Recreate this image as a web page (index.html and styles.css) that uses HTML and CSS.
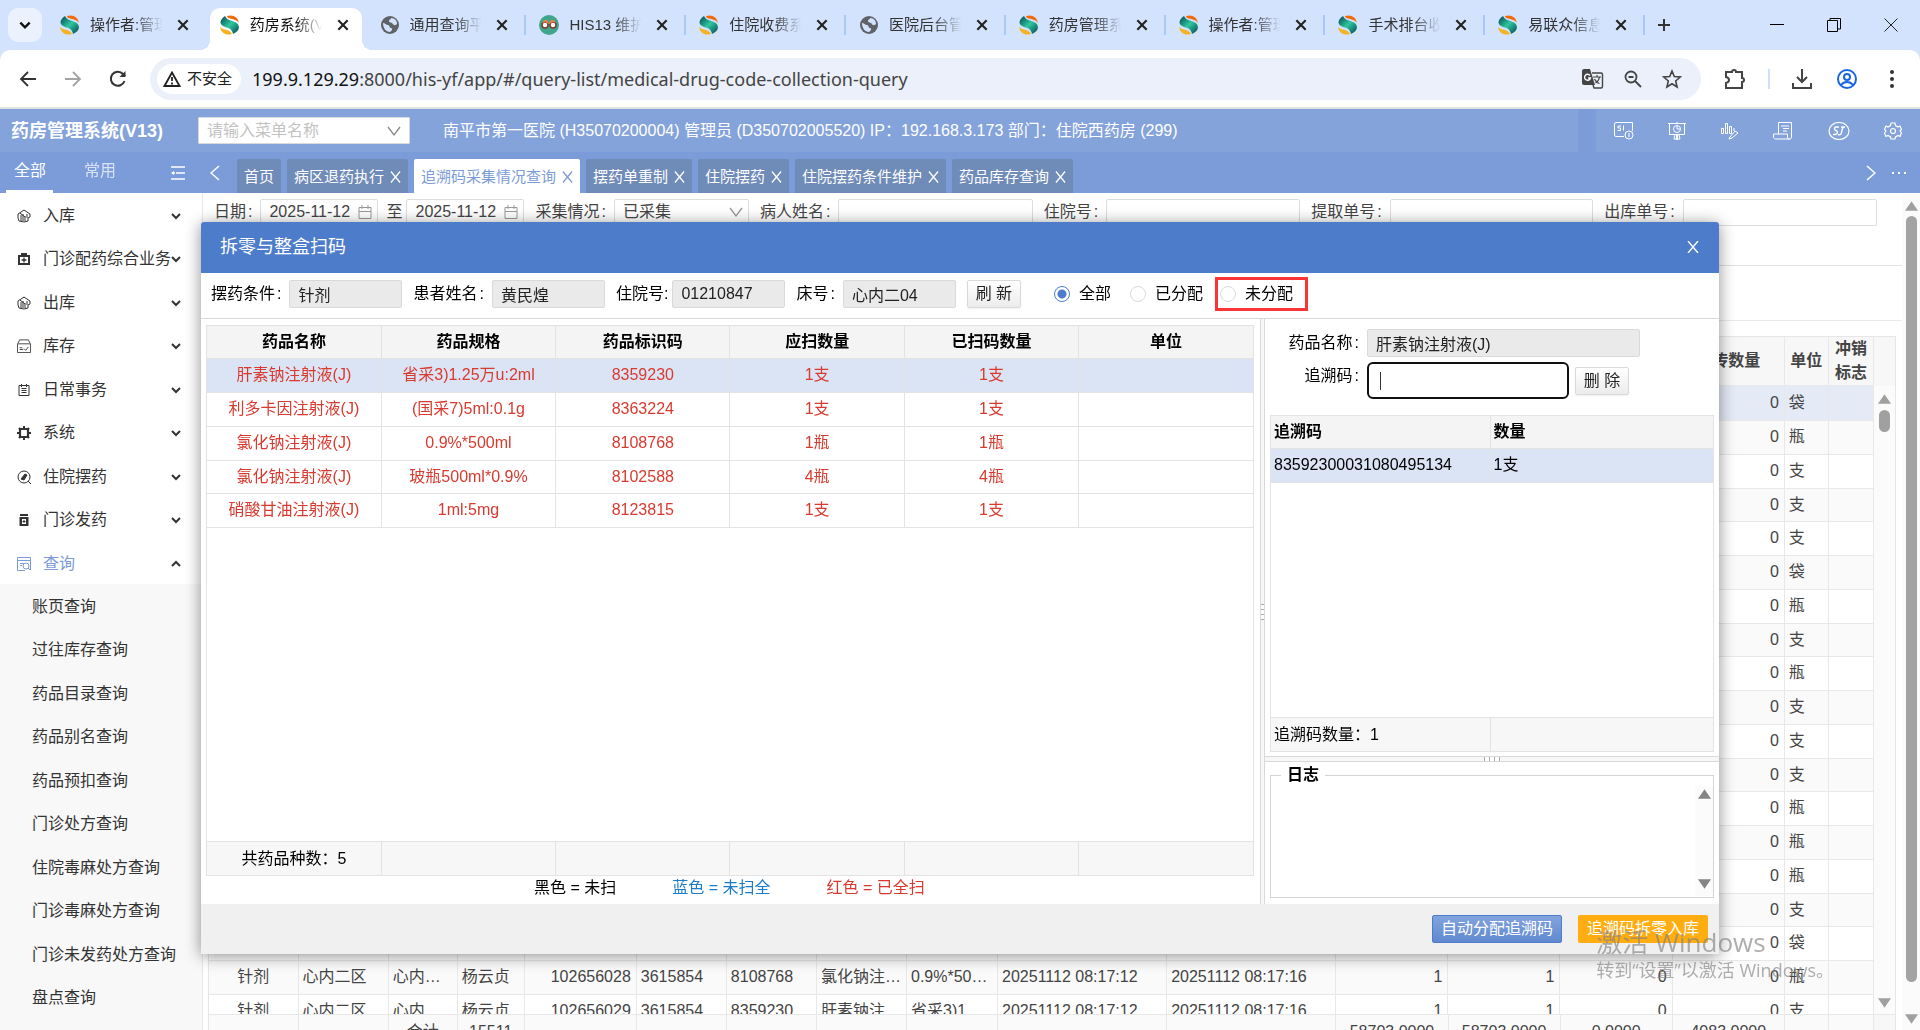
FILE: index.html
```html
<!DOCTYPE html>
<html lang="zh-CN">
<head>
<meta charset="utf-8">
<title>药房管理系统(V13)</title>
<link rel="stylesheet" href="styles.css">
</head>
<body>
<svg class="sprite" aria-hidden="true">
  <defs>
    <linearGradient id="teal" x1="0" y1="0" x2="1" y2="1"><stop offset="0" stop-color="#03444f"/><stop offset=".5" stop-color="#2fc79f"/><stop offset="1" stop-color="#03444f"/></linearGradient>
  </defs>
  <symbol id="logo" viewBox="0 0 20 20">
    <path d="M5 1C-1 5-1 10 5 12c4 1 7 2 8 7 7-3 8-9 2-12C10 5 7 5 5 1z" fill="url(#teal)"/>
    <path d="M7 1c6-2 11 1 12 7-2-3-4-3-7-4S7 3 7 1z" fill="#f26a0a"/>
    <path d="M0 12c2 2 4 2 7 3s4 2 5 4C6 21 1 18 0 12z" fill="#f5b321"/>
  </symbol>
  <symbol id="globe" viewBox="0 0 20 20">
    <circle cx="10" cy="10" r="9" fill="#5f6368"/>
    <path d="M3 8c2 0 3 2 5 2s1 3 3 3 1 3-1 4c-4 0-7-4-7-9zM11 3c0 2-2 1-2 3s3 1 4 3 3 1 4 0c0-3-2-6-6-6z" fill="#d3e3fd"/>
  </symbol>
  <symbol id="his" viewBox="0 0 20 20">
    <circle cx="10" cy="10" r="10" fill="#3fa58c"/><circle cx="6" cy="10" r="3" fill="#fff" stroke="#7a3b2a" stroke-width="1.500"/><circle cx="14" cy="10" r="3" fill="#fff" stroke="#7a3b2a" stroke-width="1.500"/><path d="M3 8l2-3h3l2 3 2-3h3l2 3-3-1-4 2-4-2z" fill="#e8804c"/>
  </symbol>
  <symbol id="x" viewBox="0 0 12 12"><path d="M2 2l8 8M10 2l-8 8" stroke="currentColor" stroke-width="1.800" fill="none"/></symbol>
  <symbol id="xthin" viewBox="0 0 12 12"><path d="M1 0l10 12M11 0L1 12" stroke="currentColor" stroke-width="1.400" fill="none"/></symbol>
  <symbol id="down" viewBox="0 0 12 12"><path d="M2 4l4 4 4-4" stroke="currentColor" stroke-width="2" fill="none"/></symbol>
  <symbol id="up" viewBox="0 0 12 12"><path d="M2 8l4-4 4 4" stroke="currentColor" stroke-width="2" fill="none"/></symbol>
  <symbol id="caret" viewBox="0 0 14 14"><path d="M1 3l6 8 6-8" stroke="currentColor" stroke-width="1.300" fill="none"/></symbol>
  <symbol id="cal" viewBox="0 0 14 14"><path d="M1 2.500h12v11H1zM1 6.500h12M4 0v4M10 0v4" stroke="currentColor" fill="none"/></symbol>
  <symbol id="stock" viewBox="0 0 14 14"><path d="M1 5l6-4 6 4v3l-2 1v3l-4 1-5-1-1-3zM4 12V6M6 12V5M8 12V7M10 9V5M3 4l5 4" stroke="currentColor" fill="none"/></symbol>
  <symbol id="box" viewBox="0 0 14 14"><path d="M2 4h10v8H2zM4 2h6" stroke="currentColor" stroke-width="2" fill="none"/><path d="M7 5.500v5M4.500 8h5" stroke="currentColor" stroke-width="1.300"/></symbol>
  <symbol id="ware" viewBox="0 0 16 16"><path d="M.5 5.500h15v10H.5zM1 5l2-4h10l2 4M3 10h3M3 12h4M8 11l2 2 3-4" stroke="currentColor" fill="none"/></symbol>
  <symbol id="list" viewBox="0 0 14 14"><path d="M2 2.500h10v10H2zM4.500 5.500h5M4.500 7.500h5M4.500 9.500h5M4.500 1v3M9.500 1v3" stroke="currentColor" fill="none"/></symbol>
  <symbol id="cog" viewBox="0 0 14 14"><path d="M3 3h8v8H3z" stroke="currentColor" stroke-width="2.200" fill="none"/><path d="M7 0v2M7 12v2M0 7h2M12 7h2M2 2l1 1M12 2l-1 1M2 12l1-1M12 12l-1-1" stroke="currentColor" stroke-width="2"/></symbol>
  <symbol id="pill" viewBox="0 0 14 14"><circle cx="7" cy="7" r="6" stroke="currentColor" fill="none"/><path d="M4 9l4-5 2 1-3 5zM11 11l3 3" stroke="currentColor" fill="currentColor"/></symbol>
  <symbol id="jar" viewBox="0 0 14 14"><path d="M3 1h8v2H3zM2.500 4h9v9h-9z" fill="currentColor"/><path d="M5 6h4v5H5z" fill="#fff"/><path d="M7 7v3M5.500 8.500h3" stroke="currentColor"/></symbol>
  <symbol id="find" viewBox="0 0 14 14"><path d="M13.500 5V.5H.5v13H8M.5 3.500h13M3 6.500h4M3 8.500h2M13.500 5v8" stroke="currentColor" fill="none"/><circle cx="9" cy="9" r="3" stroke="currentColor" fill="none"/><path d="M11 11l2 2" stroke="currentColor"/></symbol>
  <symbol id="triup" viewBox="0 0 14 10"><path d="M7 0l7 10H0z" fill="currentColor"/></symbol>
  <symbol id="tridown" viewBox="0 0 14 10"><path d="M7 10l7-10H0z" fill="currentColor"/></symbol>
</svg>

<div class="browser">
  <div class="tabstrip">
    <button class="tabsearch" aria-label="搜索标签页"><svg width="14" height="14"><use href="#down"/></svg></button>
    <div class="tabs">
      <div class="tab nosep"><svg class="fav"><use href="#logo"/></svg><span>操作者:管理员</span><button aria-label="关闭"><svg><use href="#x"/></svg></button></div>
      <div class="tab nosep active"><svg class="fav"><use href="#logo"/></svg><span>药房系统(V13)</span><button aria-label="关闭"><svg><use href="#x"/></svg></button></div>
      <div class="tab"><svg class="fav"><use href="#globe"/></svg><span>通用查询平台</span><button aria-label="关闭"><svg><use href="#x"/></svg></button></div>
      <div class="tab"><svg class="fav"><use href="#his"/></svg><span>HIS13 维护</span><button aria-label="关闭"><svg><use href="#x"/></svg></button></div>
      <div class="tab"><svg class="fav"><use href="#logo"/></svg><span>住院收费系统</span><button aria-label="关闭"><svg><use href="#x"/></svg></button></div>
      <div class="tab"><svg class="fav"><use href="#globe"/></svg><span>医院后台管理</span><button aria-label="关闭"><svg><use href="#x"/></svg></button></div>
      <div class="tab"><svg class="fav"><use href="#logo"/></svg><span>药房管理系统</span><button aria-label="关闭"><svg><use href="#x"/></svg></button></div>
      <div class="tab"><svg class="fav"><use href="#logo"/></svg><span>操作者:管理员</span><button aria-label="关闭"><svg><use href="#x"/></svg></button></div>
      <div class="tab"><svg class="fav"><use href="#logo"/></svg><span>手术排台收费</span><button aria-label="关闭"><svg><use href="#x"/></svg></button></div>
      <div class="tab"><svg class="fav"><use href="#logo"/></svg><span>易联众信息</span><button aria-label="关闭"><svg><use href="#x"/></svg></button></div>
    </div>
    <button class="newtab" aria-label="新标签页"><svg width="14" height="14" viewBox="0 0 14 14"><path d="M7 1v12M1 7h12" stroke="#333" stroke-width="2"/></svg></button>
    <div class="winbtns">
      <button aria-label="最小化"><svg width="14" height="14" viewBox="0 0 14 14"><path d="M0 6.500h14" stroke="#000"/></svg></button>
      <button aria-label="还原"><svg width="14" height="14" viewBox="0 0 14 14"><path d="M.5 2.500h10v11H.5zM3 2V.5h10.500V11H11" fill="none" stroke="#000"/></svg></button>
      <button aria-label="关闭窗口"><svg width="14" height="14" viewBox="0 0 14 14"><path d="M.5.5l13 13M13.500.5l-13 13" stroke="#222"/></svg></button>
    </div>
  </div>
  <div class="toolbar">
    <button aria-label="后退"><svg width="18" height="18" viewBox="0 0 18 18"><path d="M17 9H2M9 2L2 9l7 7" fill="none" stroke="#333" stroke-width="1.800"/></svg></button>
    <button aria-label="前进"><svg width="18" height="18" viewBox="0 0 18 18"><path d="M1 9h15M9 2l7 7-7 7" fill="none" stroke="#a3a3a3" stroke-width="1.800"/></svg></button>
    <button aria-label="刷新"><svg width="18" height="18" viewBox="0 0 18 18"><path d="M15.500 11A7 7 0 1 1 14 4l2 2" fill="none" stroke="#333" stroke-width="2"/><path d="M16.500 1v6h-6z" fill="#333"/></svg></button>
    <div class="omnibox">
      <button class="chip"><svg width="18" height="16" viewBox="0 0 18 16"><path d="M9 1.500L1.500 15h15z" fill="none" stroke="#222" stroke-width="1.800"/><path d="M9 6v4M9 11.500v2" stroke="#222" stroke-width="1.800"/></svg>不安全</button>
      <div class="url"><b>199.9.129.29</b>:8000/his-yf/app/#/query-list/medical-drug-code-collection-query</div>
      <svg width="22" height="20" viewBox="0 0 22 20"><path d="M2 0h6l5 16H2a2 2 0 0 1-2-2V2a2 2 0 0 1 2-2z" fill="#444"/><path d="M10 4h9a1.500 1.500 0 0 1 1.500 1.500v12A1.500 1.500 0 0 1 19 19h-7l-1-3" fill="none" stroke="#444" stroke-width="1.400"/><path d="M8 6.500A3 3 0 1 0 8.500 9H6" stroke="#fff" fill="none" stroke-width="1.400"/><path d="M11 8h8M15 6v2M17.500 8c-.5 3-2 5-4 6M12.500 10c1 2 3 4 5 4.500" stroke="#444" fill="none" stroke-width="1.200"/></svg>
      <svg width="18" height="18" viewBox="0 0 18 18"><circle cx="7" cy="7" r="5.500" fill="none" stroke="#444" stroke-width="1.800"/><path d="M11 11l6 6M4.500 7h5" stroke="#444" stroke-width="1.800"/></svg>
      <svg width="20" height="20" viewBox="0 0 20 20"><path d="M10 2l2.300 5.500 6 .5-4.600 4 1.400 6-5.100-3.200L4.900 18l1.400-6-4.600-4 6-.5z" fill="none" stroke="#444" stroke-width="1.600"/></svg>
    </div>
    <svg width="22" height="22" viewBox="0 0 22 22"><path d="M2 4h6a2 2 0 0 1 4 0h6v6a2 2 0 0 1 0 4v6H2v-5c4-1 4-5 0-6z" fill="none" stroke="#444" stroke-width="2"/></svg>
    <i class="bar"></i>
    <svg width="20" height="20" viewBox="0 0 20 20"><path d="M10 0v12M5 8l5 5 5-5M1 14v5h18v-5" fill="none" stroke="#444" stroke-width="2"/></svg>
    <svg width="20" height="20" viewBox="0 0 20 20"><g fill="none" stroke="#1a66e0" stroke-width="2"><circle cx="10" cy="10" r="9"/><circle cx="10" cy="8" r="3"/><path d="M4 16c3-4 9-4 12 0"/></g></svg>
    <svg width="6" height="18" viewBox="0 0 6 18"><circle cx="3" cy="2" r="2" fill="#333"/><circle cx="3" cy="9" r="2" fill="#333"/><circle cx="3" cy="16" r="2" fill="#333"/></svg>
  </div>
</div>

<header class="apphead">
  <div class="apphead-left">
    <h1>药房管理系统(V13)</h1>
    <div class="menusel"><select aria-label="菜单名称"><option>请输入菜单名称</option></select><svg width="14" height="14"><use href="#caret"/></svg></div>
    <p>南平市第一医院 (H35070200004) 管理员 (D350702005520) IP：192.168.3.173 部门：住院西药房 (299)</p>
  </div>
  <div class="apphead-icons">
    <svg width="20" height="18" viewBox="0 0 20 18"><path d="M10 14.500H2a1.500 1.500 0 0 1-1.500-1.500V2A1.500 1.500 0 0 1 2 .5h16.500V9M7 4H4v2h2.500v2.500H3.500M9.500 3.500v5" fill="none" stroke="#fff"/><circle cx="15" cy="13" r="4" fill="none" stroke="#fff"/><path d="M15 11v4" stroke="#fff"/></svg>
    <svg width="18" height="18" viewBox="0 0 18 18"><path d="M0 1.500h18M1.500 2v10.500h15V2M9 0v2M7 13l-1 4h6l-1-4" fill="none" stroke="#fff"/><path d="M8 13h2v5H8z" fill="#fff"/><circle cx="9" cy="7" r="3.500" fill="none" stroke="#fff"/><path d="M9 4v3h3" fill="none" stroke="#fff"/></svg>
    <svg width="18" height="18" viewBox="0 0 18 18"><path d="M.5 6.500h2v5h-2zM4.500 1.500h2v10h-2zM8.500 4.500h2v7h-2zM9 15l5-6 3 2-6 5-3 1zM13 6v3" fill="none" stroke="#fff"/></svg>
    <svg width="20" height="18" viewBox="0 0 20 18"><path d="M5.500 12V.5h13V15c0 3-4 3-4 0v-3H.5v3c0 1 1 2 2 2h14M8 4h8M10 6.500h6M10 9h4" fill="none" stroke="#fff"/></svg>
    <svg width="22" height="18" viewBox="0 0 22 18"><ellipse cx="11" cy="9" rx="10" ry="8.500" fill="none" stroke="#fff" stroke-width="1.200"/><path d="M11 5H8c-2 0-2 3 0 3.500s2 4-1 4H5M15 5l-2 7c-.5 1-2 1-3 .5M13 5h4" fill="none" stroke="#fff" stroke-width="1.400"/></svg>
    <svg width="18" height="18" viewBox="0 0 18 18"><path d="M7 1h4l.5 2.500L14 5l2-1 1.500 3.500L16 9l1.500 2L16 14.500l-2-1-2.500 1.500L11 17H7l-.5-2L4 13.500l-2 1L.5 11 2 9 .5 7.500 2 4l2 1 2.500-1.500z" fill="none" stroke="#fff" stroke-width="1.200"/><circle cx="9" cy="9" r="2.500" fill="none" stroke="#fff" stroke-width="1.200"/></svg>
  </div>
</header>

<nav class="navrow">
  <div class="navleft">
    <button class="on">全部</button><button>常用</button>
    <svg width="14" height="14" viewBox="0 0 14 14"><path d="M0 1h14M5 7h9M0 13h14M1 7h3" stroke="#fff" stroke-width="1.500"/><path d="M0 7l3-2v4z" fill="#fff"/></svg>
  </div>
  <svg class="arrow" width="10" height="16" viewBox="0 0 10 16"><path d="M9 1L1 8l8 7" fill="none" stroke="#fff" stroke-width="1.500"/></svg>
  <div class="pages">
    <a href="#">首页</a>
    <a href="#">病区退药执行<svg><use href="#xthin"/></svg></a>
    <a href="#" class="cur">追溯码采集情况查询<svg><use href="#xthin"/></svg></a>
    <a href="#">摆药单重制<svg><use href="#xthin"/></svg></a>
    <a href="#">住院摆药<svg><use href="#xthin"/></svg></a>
    <a href="#">住院摆药条件维护<svg><use href="#xthin"/></svg></a>
    <a href="#">药品库存查询<svg><use href="#xthin"/></svg></a>
  </div>
  <svg class="arrow" width="10" height="16" viewBox="0 0 10 16"><path d="M1 1l8 7-8 7" fill="none" stroke="#fff" stroke-width="1.500"/></svg>
  <svg class="dots" width="14" height="4" viewBox="0 0 14 4"><path d="M0 2h2M6 2h2M12 2h2" stroke="#fff" stroke-width="2"/></svg>
</nav>

<div class="work">
  <aside>
    <ul class="menu">
      <li><svg class="ico"><use href="#stock"/></svg><span>入库</span><svg class="chev"><use href="#down"/></svg></li>
      <li><svg class="ico"><use href="#box"/></svg><span>门诊配药综合业务</span><svg class="chev"><use href="#down"/></svg></li>
      <li><svg class="ico"><use href="#stock"/></svg><span>出库</span><svg class="chev"><use href="#down"/></svg></li>
      <li><svg class="ico"><use href="#ware"/></svg><span>库存</span><svg class="chev"><use href="#down"/></svg></li>
      <li><svg class="ico"><use href="#list"/></svg><span>日常事务</span><svg class="chev"><use href="#down"/></svg></li>
      <li><svg class="ico"><use href="#cog"/></svg><span>系统</span><svg class="chev"><use href="#down"/></svg></li>
      <li><svg class="ico"><use href="#pill"/></svg><span>住院摆药</span><svg class="chev"><use href="#down"/></svg></li>
      <li><svg class="ico"><use href="#jar"/></svg><span>门诊发药</span><svg class="chev"><use href="#down"/></svg></li>
      <li class="open"><svg class="ico"><use href="#find"/></svg><span>查询</span><svg class="chev"><use href="#up"/></svg></li>
    </ul>
    <ul class="submenu">
      <li><a href="#">账页查询</a></li>
      <li><a href="#">过往库存查询</a></li>
      <li><a href="#">药品目录查询</a></li>
      <li><a href="#">药品别名查询</a></li>
      <li><a href="#">药品预扣查询</a></li>
      <li><a href="#">门诊处方查询</a></li>
      <li><a href="#">住院毒麻处方查询</a></li>
      <li><a href="#">门诊毒麻处方查询</a></li>
      <li><a href="#">门诊未发药处方查询</a></li>
      <li><a href="#">盘点查询</a></li>
    </ul>
  </aside>

  <main>
    <form class="search">
      <label for="d1">日期<i>:</i></label>
      <span class="date"><input id="d1" value="2025-11-12"><svg><use href="#cal"/></svg></span>
      <label for="d2" class="to">至</label>
      <span class="date"><input id="d2" value="2025-11-12"><svg><use href="#cal"/></svg></span>
      <label for="st">采集情况<i>:</i></label>
      <span class="state"><select id="st"><option>已采集</option></select><svg><use href="#caret"/></svg></span>
      <label for="nm">病人姓名<i>:</i></label><input id="nm" class="grow">
      <label for="zy">住院号<i>:</i></label><input id="zy" class="grow">
      <label for="tq">提取单号<i>:</i></label><input id="tq" class="grow more">
      <label for="ck">出库单号<i>:</i></label><input id="ck" class="grow">
    </form>
    <div class="band"></div>
    <div class="grid">
      <div class="grid-head">
        <table>
          <colgroup><col class="c89"><col class="c90"><col class="c69"><col class="c67"><col class="c112"><col class="c90"><col class="c90"><col class="c90"><col class="c91"><col class="c169"><col class="c169"><col class="c112"><col class="c112"><col class="c112"><col class="c112"><col class="c44"><col class="c45"></colgroup>
          <tr><th colspan="14"></th><th>上传数量</th><th>单位</th><th>冲销标志</th></tr>
        </table>
        <div class="gutter"></div>
      </div>
      <div class="grid-body">
        <table>
          <colgroup><col class="c89"><col class="c90"><col class="c69"><col class="c67"><col class="c112"><col class="c90"><col class="c90"><col class="c90"><col class="c91"><col class="c169"><col class="c169"><col class="c112"><col class="c112"><col class="c112"><col class="c112"><col class="c44"><col class="c45"></colgroup>
          <tr class="sel"><td colspan="14"></td><td class="n">0</td><td>袋</td><td></td></tr>
          <tr><td colspan="14"></td><td class="n">0</td><td>瓶</td><td></td></tr>
          <tr><td colspan="14"></td><td class="n">0</td><td>支</td><td></td></tr>
          <tr><td colspan="14"></td><td class="n">0</td><td>支</td><td></td></tr>
          <tr><td colspan="14"></td><td class="n">0</td><td>支</td><td></td></tr>
          <tr><td colspan="14"></td><td class="n">0</td><td>袋</td><td></td></tr>
          <tr><td colspan="14"></td><td class="n">0</td><td>瓶</td><td></td></tr>
          <tr><td colspan="14"></td><td class="n">0</td><td>支</td><td></td></tr>
          <tr><td colspan="14"></td><td class="n">0</td><td>瓶</td><td></td></tr>
          <tr><td colspan="14"></td><td class="n">0</td><td>支</td><td></td></tr>
          <tr><td colspan="14"></td><td class="n">0</td><td>支</td><td></td></tr>
          <tr><td colspan="14"></td><td class="n">0</td><td>支</td><td></td></tr>
          <tr><td colspan="14"></td><td class="n">0</td><td>瓶</td><td></td></tr>
          <tr><td colspan="14"></td><td class="n">0</td><td>瓶</td><td></td></tr>
          <tr><td colspan="14"></td><td class="n">0</td><td>瓶</td><td></td></tr>
          <tr><td colspan="14"></td><td class="n">0</td><td>支</td><td></td></tr>
          <tr><td></td><td></td><td></td><td></td><td></td><td></td><td></td><td></td><td></td><td></td><td></td><td></td><td></td><td></td><td class="n">0</td><td>袋</td><td></td></tr>
          <tr><td class="m">针剂</td><td>心内二区</td><td>心内…</td><td>杨云贞</td><td class="n">102656028</td><td>3615854</td><td>8108768</td><td>氯化钠注…</td><td>0.9%*50…</td><td>20251112 08:17:12</td><td>20251112 08:17:16</td><td class="n">1</td><td class="n">1</td><td class="n">0</td><td class="n">0</td><td>瓶</td><td></td></tr>
          <tr><td class="m">针剂</td><td>心内二区</td><td>心内…</td><td>杨云贞</td><td class="n">102656029</td><td>3615854</td><td>8359230</td><td>肝素钠注…</td><td>省采3)1…</td><td>20251112 08:17:12</td><td>20251112 08:17:16</td><td class="n">1</td><td class="n">1</td><td class="n">0</td><td class="n">0</td><td>支</td><td></td></tr>
        </table>
        <div class="gutter scroll"><svg class="tri"><use href="#triup"/></svg><i></i><svg class="tri last"><use href="#tridown"/></svg></div>
      </div>
      <div class="grid-foot">
        <table>
          <colgroup><col class="c89"><col class="c90"><col class="c69"><col class="c67"><col class="c112"><col class="c90"><col class="c90"><col class="c90"><col class="c91"><col class="c169"><col class="c169"><col class="c112"><col class="c112"><col class="c112"><col class="c112"><col class="c44"><col class="c45"></colgroup>
          <tr><td></td><td></td><td>合计</td><td>15511</td><td></td><td></td><td></td><td></td><td></td><td></td><td></td><td>58703.0000</td><td>58703.0000</td><td>0.0000</td><td>4083.0000</td><td></td><td></td></tr>
        </table>
        <div class="gutter"></div>
      </div>
    </div>
  </main>
  <div class="pagescroll"><svg class="tri"><use href="#triup"/></svg><i></i><svg class="tri"><use href="#tridown"/></svg></div>
</div>

<div class="dialog" role="dialog" aria-label="拆零与整盒扫码">
  <div class="dialog-head"><h2>拆零与整盒扫码</h2><button aria-label="关闭"><svg width="12" height="12"><use href="#xthin"/></svg></button></div>
  <form class="filters">
    <label for="f1">摆药条件<i>:</i></label><input id="f1" value="针剂" readonly>
    <label for="f2">患者姓名<i>:</i></label><input id="f2" value="黄民煌" readonly>
    <label for="f3" class="tight">住院号<i>:</i></label><input id="f3" value="01210847" readonly>
    <label for="f4">床号<i>:</i></label><input id="f4" value="心内二04" readonly>
    <button type="button" class="btn refresh">刷 新</button>
    <div class="radios">
      <label><input type="radio" name="r" checked>全部</label>
      <label><input type="radio" name="r">已分配</label>
      <label class="mark"><input type="radio" name="r">未分配</label>
    </div>
  </form>
  <div class="dialog-body">
    <section class="left">
      <div class="tbox">
        <table class="drugs">
          <tr class="th"><th>药品名称</th><th>药品规格</th><th>药品标识码</th><th>应扫数量</th><th>已扫码数量</th><th>单位</th></tr>
          <tr class="sel"><td>肝素钠注射液(J)</td><td>省采3)1.25万u:2ml</td><td>8359230</td><td>1支</td><td>1支</td><td></td></tr>
          <tr><td>利多卡因注射液(J)</td><td>(国采7)5ml:0.1g</td><td>8363224</td><td>1支</td><td>1支</td><td></td></tr>
          <tr><td>氯化钠注射液(J)</td><td>0.9%*500ml</td><td>8108768</td><td>1瓶</td><td>1瓶</td><td></td></tr>
          <tr><td>氯化钠注射液(J)</td><td>玻瓶500ml*0.9%</td><td>8102588</td><td>4瓶</td><td>4瓶</td><td></td></tr>
          <tr><td>硝酸甘油注射液(J)</td><td>1ml:5mg</td><td>8123815</td><td>1支</td><td>1支</td><td></td></tr>
        </table>
        <table class="sum"><tr><td>共药品种数：5</td><td></td><td></td><td></td><td></td><td></td></tr></table>
      </div>
      <div class="legend"><span>黑色 = 未扫</span><span class="blue">蓝色 = 未扫全</span><span class="red">红色 = 已全扫</span></div>
    </section>
    <div class="vsplit"><i></i></div>
    <section class="right">
      <div class="codes">
        <div class="line"><label for="g1">药品名称<i>:</i></label><input id="g1" class="wide" value="肝素钠注射液(J)" readonly></div>
        <div class="line scan"><label for="g2">追溯码<i>:</i></label><span class="focus"><i></i><input id="g2"></span><button class="btn">删 除</button></div>
        <div class="tbox">
          <table class="trace">
            <tr class="th"><th>追溯码</th><th>数量</th></tr>
            <tr class="sel"><td>83592300031080495134</td><td>1支</td></tr>
          </table>
          <table class="sum trace"><tr><td>追溯码数量：1</td><td></td></tr></table>
        </div>
      </div>
      <div class="hsplit"><i></i></div>
      <fieldset><legend>日志</legend><div class="logbar"><svg class="tri"><use href="#triup"/></svg><svg class="tri"><use href="#tridown"/></svg></div></fieldset>
    </section>
  </div>
  <div class="dialog-foot"><button class="primary">自动分配追溯码</button><button class="warn">追溯码拆零入库</button></div>
</div>

<div class="watermark"><p>激活 Windows</p><p>转到“设置”以激活 Windows。</p></div>
</body>
</html>
```
FILE: styles.css
```css
* { box-sizing: border-box; }
html, body { height: 100%; margin: 0; }
body {
  display: flex; flex-direction: column; overflow: hidden;
  font: 16px/20px "Liberation Sans", "Noto Sans CJK SC", sans-serif;
  color: #444; background: #fff;
}
h1, h2, p, ul { margin: 0; padding: 0; }
ul { list-style: none; }
i { font-style: normal; }
a { color: inherit; text-decoration: none; }
button, input, select { font: inherit; color: inherit; margin: 0; }
button { padding: 0; border: 0; background: none; }
svg { flex: none; display: block; }
.sprite { position: absolute; width: 0; height: 0; }
.tri { width: 13px; height: 10px; color: #a0a0a0; }

/* browser chrome */
.browser { flex: none; background: #d3e3fd; border-bottom: 2px solid #dfe3e1; }
.tabstrip { display: flex; align-items: flex-end; height: 50px; padding-left: 8px; }
.tabsearch { width: 34px; height: 34px; margin: 0 8px 8px 0; border-radius: 10px; background: #ebf1fd; display: grid; place-items: center; color: #111; }
.tabs { display: flex; flex: 1; max-width: 1598px; gap: 8px; padding-right: 8px; }
.tab { position: relative; flex: 1; min-width: 0; height: 42px; padding: 0 14px 8px 10px; display: flex; align-items: center; font-size: 15px; color: #333; }
.tab .fav { width: 20px; height: 20px; margin-right: 10px; }
.tab span { flex: 1; overflow: hidden; white-space: nowrap; mask-image: linear-gradient(90deg, #000 60%, transparent 98%); }
.tab button { margin-left: 12px; }
.tab button svg { width: 14px; height: 14px; color: #222; margin-right: -2px; }
.tab::after { content: ""; position: absolute; right: -5px; top: 7px; width: 2px; height: 20px; background: #a8c7fa; }
.tab.nosep::after { background: none; }
.tab.active { background: #fff; border-radius: 10px 10px 0 0; color: #111; }
.tab.active::before, .tab.active::after { content: ""; position: absolute; top: auto; bottom: 0; width: 10px; height: 10px; }
.tab.active::before { left: -10px; background: radial-gradient(circle at 0 0, transparent 10px, #fff 10px); }
.tab.active::after { right: -10px; background: radial-gradient(circle at 100% 0, transparent 10px, #fff 10px); }
.newtab { margin: 0 0 18px 9px; }
.winbtns { margin-left: auto; display: flex; padding: 0 22px 18px 0; gap: 43px; }
.toolbar { display: flex; align-items: center; height: 57px; padding: 0 25px 0 19px; background: #fff; border-radius: 10px 10px 0 0; }
.toolbar > button { margin-right: 27px; }
.toolbar > button:nth-of-type(3) { margin-right: 23px; }
.omnibox { flex: 1; display: flex; align-items: center; height: 42px; padding: 0 19px 0 7px; margin-right: 23px; border-radius: 21px; background: #ebf0fa; }
.omnibox > svg { margin-left: 20px; }
.chip { display: flex; align-items: center; gap: 6px; height: 30px; padding: 0 9px 0 6px; border-radius: 15px; background: #fff; color: #222; font-size: 15px; }
.url { flex: 1; margin-left: 11px; white-space: nowrap; color: #444; font: 18px/24px "Noto Sans", sans-serif; }
.url b { font-weight: 400; color: #111; }
.bar { width: 2px; height: 20px; margin: 0 22px 0 22px; background: #cfe0fc; }
.toolbar > svg ~ svg { margin-right: 25px; }
.toolbar > svg:last-child { margin-right: 0; margin-left: 7px; }

/* application header */
.apphead { flex: none; display: flex; justify-content: space-between; height: 43px; background: #7b9cd8; color: #fff; }
.apphead-left { flex: 1; margin-right: 18px; display: flex; align-items: center; background: #84a3da; padding-left: 11px; min-width: 0; }
.apphead h1 { font-size: 18px; width: 187px; }
.apphead p { margin-left: 33px; white-space: nowrap; }
.menusel { position: relative; width: 212px; }
.menusel select { width: 100%; height: 27px; padding: 0 8px; appearance: none; border: 1px solid #d9d9d9; border-radius: 1px; background: #fff; color: #c3c3c3; }
.menusel svg { position: absolute; right: 9px; top: 7px; color: #888; }
.apphead-icons { width: 324px; padding: 0 18px; display: flex; align-items: center; justify-content: space-between; background: #84a3da; }
.navrow { flex: none; display: flex; align-items: center; height: 41px; background: #7b9cd8; color: #fff; padding-right: 14px; }
.navleft { width: 203px; height: 41px; display: flex; align-items: center; padding-left: 6px; }
.navleft button { width: 47px; height: 41px; border-bottom: 3px solid transparent; text-align: left; padding-left: 8px; opacity: .7; }
.navleft button.on { border-color: #fff; opacity: 1; }
.navleft button + button { margin-left: 23px; }
.navleft svg { margin-left: 48px; }
.navrow .arrow { margin-left: 7px; }
.pages { flex: 1; align-self: flex-end; display: flex; gap: 6px; margin-left: 17px; }
.pages a { display: flex; align-items: center; gap: 6px; height: 34px; padding: 2px 7px 0; border-radius: 2px 2px 0 0; background: #6f8bb8; font-size: 15px; white-space: nowrap; }
.pages a.cur { background: #fff; color: #7b9cd8; }
.pages svg { width: 11px; height: 12px; }
.navrow .dots { margin-left: 16px; }

/* work area */
.work { flex: 1; min-height: 0; display: flex; }
aside { flex: none; width: 203px; border-right: 1px solid #e8e8e8; display: flex; flex-direction: column; color: #333; }
.menu li { display: flex; align-items: center; height: 43px; padding: 2px 21px 0 16px; white-space: nowrap; }
.menu li:nth-child(even), .submenu li:nth-child(even) { height: 44px; }
.menu span { flex: 1; width: 0; margin-left: 11px; }
.ico { width: 16px; height: 16px; padding: 1px; }
.chev { width: 12px; height: 12px; margin-right: -1px; }
.menu .open { color: #7b9cd8; }
.open .chev { color: #333; }
.submenu { flex: 1; background: #f8f8f8; }
.submenu li { height: 43px; padding: 13px 0 0 32px; white-space: nowrap; }
main { flex: 1; min-width: 0; display: flex; flex-direction: column; padding: 0 6px 0 5px; overflow: hidden; background: #fff; }
.search { flex: none; display: flex; align-items: center; height: 38px; margin-right: 19px; padding-left: 6px; white-space: nowrap; }
.search label i, .dialog label i { margin: 0 8px 0 2px; }
.search label { margin-left: 11px; }
.search label:first-child { margin-left: 0; }
.search label.to { margin: 0 4px 0 8px; }
.search input, .search select { height: 27px; border: 1px solid #ddd; border-radius: 2px; background: #fff; padding: 0 8px; min-width: 0; appearance: none; }
.search .grow { flex: 19; width: 0; }
.search .more { flex: 20; }
.date, .state { position: relative; width: 118px; }
.state { width: 135px; }
.date input, .state select { width: 100%; }
.date svg, .state svg { position: absolute; right: 6px; top: 6px; width: 14px; height: 14px; color: #999; }
.band { flex: none; height: 56px; margin: 34px -6px 0 0; border-top: 1px solid #e0e0e0; border-bottom: 1px solid #eaeaea; }
.grid { flex: 1; min-height: 0; display: flex; flex-direction: column; margin-top: 15px; border: 1px solid #e6e6e6; border-bottom: 0; }
.grid-head, .grid-body, .grid-foot { display: flex; flex: none; }
.grid-body { flex: 1; min-height: 0; overflow: hidden; align-items: stretch; }
.gutter { flex: none; width: 21px; background: #f7f7f7; }
.grid table { flex: 1; width: 0; table-layout: fixed; border-collapse: collapse; align-self: flex-start; }
.grid td, .grid th { border-right: 1px solid #e8e8e8; border-bottom: 1px solid #e8e8e8; padding: 0 4px; white-space: nowrap; overflow: hidden; }
.grid th { height: 48px; background: #f7f7f7; white-space: normal; line-height: 24px; }
.grid tr { height: 34px; }
.grid tr:nth-child(4n), .drugs tr:nth-child(5) { height: 33px; }
.grid-body tr:nth-child(even) { background: #fafafa; }
.grid-body tr.sel { background: #e4eaf6; }
.grid .n { text-align: right; padding-right: 5px; }
.grid .m { text-align: center; }
.grid-foot { height: 16px; overflow: hidden; background: #fafafa; border-top: 1px solid #e8e8e8; }
.grid-foot td { text-align: center; }
.scroll { display: flex; flex-direction: column; align-items: center; background: #fbfbfb; padding: 8px 0 6px; }
.scroll i { width: 11px; height: 22px; margin-top: 6px; border-radius: 6px; background: #a0a0a0; }
.scroll .last { margin-top: auto; }
.c89 { width: 89px; } .c90 { width: 90px; } .c69 { width: 69px; } .c67 { width: 67px; } .c112 { width: 112px; }
.c91 { width: 91px; } .c169 { width: 169px; } .c44 { width: 44px; } .c45 { width: 45px; }
.pagescroll { flex: none; width: 18px; padding: 8px 0 6px; display: flex; flex-direction: column; align-items: center; background: #fbfbfb; }
.pagescroll i { flex: 1; width: 11px; margin: 5px 0 32px; border-radius: 6px; background: #a3a3a3; }

/* dialog */
.dialog { position: fixed; left: 201px; right: 201px; top: 222px; bottom: 76px; display: flex; flex-direction: column; background: #fff; color: #000; border-radius: 3px 3px 0 0; box-shadow: 0 2px 16px rgba(0,0,0,.45); }
.dialog-head { flex: none; display: flex; align-items: center; justify-content: space-between; height: 51px; padding: 0 20px 2px 19px; background: #4d7dca; color: #fff; border-radius: 3px 3px 0 0; }
.dialog-head h2 { font-size: 18px; font-weight: 400; }
.filters { flex: none; display: flex; align-items: center; height: 46px; padding: 0 10px 3px; border-bottom: 1px solid #d9d9d9; white-space: nowrap; }
.dialog input { height: 28px; padding: 0 8px; border: 1px solid #d9d9d9; border-radius: 2px; background: #eaeaea; color: #222; }
.filters > input { width: 113px; margin-right: 11px; }
.dialog label.tight i { margin: 0 4px 0 0; }
.btn { height: 28px; border: 1px solid #d9d9d9; border-radius: 2px; background: linear-gradient(#fff, #ececec); color: #222; box-shadow: 0 1px 2px rgba(0,0,0,.06); width: 54px; }
.radios { display: flex; margin-left: 24px; }
.radios label { display: flex; align-items: center; height: 34px; margin-right: 4px; padding: 0 6px 0 9px; border: 0 solid transparent; }
.dialog .radios input { appearance: none; width: 16px; height: 16px; padding: 0; margin-right: 9px; border: 1px solid #d9d9d9; border-radius: 50%; background: #fff; }
.dialog .radios input:checked { border-color: #4d7dca; background: radial-gradient(circle, #4d7dca 4px, #fff 5px); }
.radios .mark { margin-left: 2px; padding: 0 12px 0 2px; border: 3px solid #fb3535; }
.dialog-body { flex: 1; min-height: 0; display: flex; }
.left { flex: 1048; width: 0; display: flex; flex-direction: column; padding: 6px 6px 0 5px; }
.tbox { flex: 1; display: flex; flex-direction: column; justify-content: space-between; border: 1px solid #e3e3e3; }
.tbox table { width: 100%; table-layout: fixed; border-collapse: collapse; }
.tbox th, .tbox td { padding: 0; text-align: center; border-right: 1px solid #e3e3e3; border-bottom: 1px solid #e3e3e3; }
.tbox th:last-child, .tbox td:last-child { border-right: 0; }
.tbox tr { height: 34px; }
.tbox tr.th { height: 32px; background: #f4f4f4; }
.tbox .drugs td { color: #d93a2f; }
.tbox .sel { background: #dbe4f5; }
.tbox .sum td { background: #f7f7f7; border-top: 1px solid #e3e3e3; border-bottom: 0; padding-top: 2px; }
.legend { flex: none; display: flex; height: 28px; padding: 2px 0 0 328px; gap: 56px; }
.blue { color: #1b7cc8; }
.red { color: #d93a2f; }
.vsplit { flex: none; width: 5px; border: 1px solid #d9d9d9; border-width: 0 1px; background: #f7f7f7; display: grid; place-items: center; }
.vsplit i { width: 3px; height: 16px; background: repeating-linear-gradient(#aaa 0 1px, #fff 1px 5px); }
.right { flex: 454; width: 0; display: flex; flex-direction: column; }
.codes { flex: 1; display: flex; flex-direction: column; padding: 10px 5px 4px; }
.line { display: flex; align-items: center; }
.line label { width: 97px; text-align: right; white-space: nowrap; }
.line .wide { width: 273px; }
.scan { margin: 5px 0 16px; height: 37px; }
.scan label { padding-bottom: 9px; }
.focus { display: flex; align-items: center; width: 202px; height: 37px; margin-right: 6px; padding-left: 11px; border: 2px solid #101010; border-radius: 6px; background: #fff; }
.dialog .focus i { width: 1px; height: 18px; background: #333; }
.dialog .focus input { flex: 1; width: 0; border: 0; background: transparent; outline: 0; }
.tbox .trace th, .tbox .trace td { text-align: left; padding-left: 3px; }
.trace tr > :first-child { width: 219px; }
.hsplit { flex: none; height: 6px; border: 1px solid #d9d9d9; border-width: 1px 0; background: #f7f7f7; display: grid; place-items: center; }
.hsplit i { width: 16px; height: 4px; background: repeating-linear-gradient(90deg, #aaa 0 1px, #fff 1px 5px); }
fieldset { flex: none; height: 134px; margin: 2px 5px 6px; padding: 0; border: 1px solid #d4d4d4; min-width: 0; }
legend { margin-left: 10px; padding: 0 6px; font-weight: 700; line-height: 22px; }
.logbar { width: 18px; height: 110px; margin-left: auto; padding: 3px 0 7px; display: flex; flex-direction: column; align-items: center; justify-content: space-between; background: #fbfbfb; }
.logbar .tri { color: #858585; }
.dialog-foot { flex: none; height: 50px; display: flex; justify-content: flex-end; align-items: center; gap: 16px; padding: 0 11px 1px; background: #f0f0f0; }
.dialog-foot button { height: 28px; width: 130px; border-radius: 2px; color: #fff; }
.dialog-foot .primary { border: 1px solid #4d7dca; background: linear-gradient(#82a3dd, #6089cf); }
.dialog-foot .warn { background: #ffad10; }
.watermark { position: fixed; right: 86px; bottom: 48px; color: rgba(130,130,130,.65); font-family: "Open Sans", "Noto Sans CJK SC", sans-serif; white-space: nowrap; pointer-events: none; }
.watermark p { font-size: 26px; line-height: 32px; }
.watermark p + p { font-size: 18px; line-height: 24px; }
```
